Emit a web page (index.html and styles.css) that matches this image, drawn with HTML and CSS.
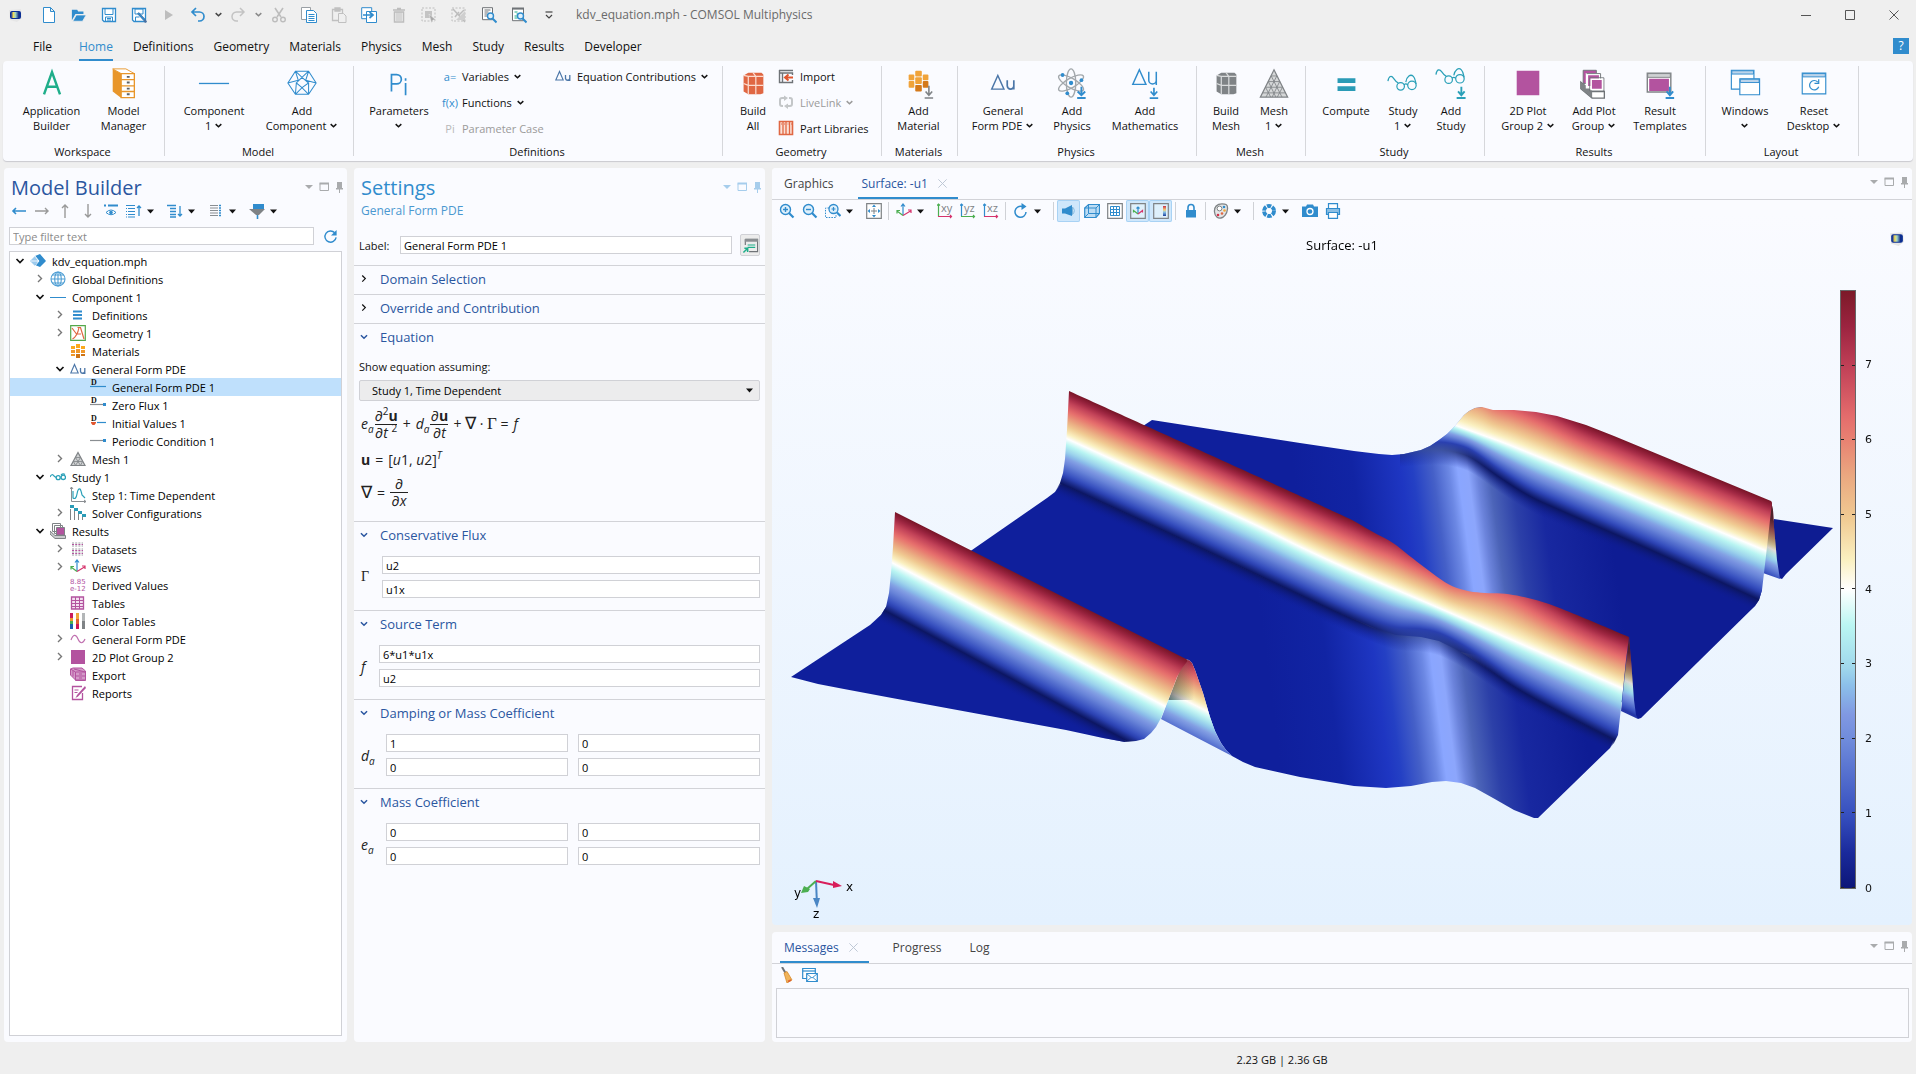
FILE: index.html
```html
<!DOCTYPE html>
<html lang="en">
<head>
<meta charset="utf-8">
<title>kdv_equation.mph - COMSOL Multiphysics</title>
<link rel="stylesheet" href="styles.css">
</head>
<body>
<svg class="sprite" aria-hidden="true">
  <defs>
    <linearGradient id="heat" x1="0" y1="1" x2="0" y2="0"><stop offset="0" stop-color="#1c3fa0"/><stop offset=".4" stop-color="#8cc8ea"/><stop offset=".6" stop-color="#f5d27a"/><stop offset="1" stop-color="#c8324a"/></linearGradient>
    <linearGradient id="chip" x1="0" y1="0" x2="1" y2="0"><stop offset="0" stop-color="#0c2a9c"/><stop offset=".3" stop-color="#f5dd55"/><stop offset=".55" stop-color="#9fd6c8"/><stop offset="1" stop-color="#0a1f80"/></linearGradient>
  </defs>
  <symbol id="logo" viewBox="0 0 16 16"><path d="M2 3l12-1 1 9-5 4-7-2z" fill="#e6e6e6"/><rect x="3" y="4" width="11" height="8" rx="2" fill="#0b2f93"/><rect x="4" y="5" width="8" height="6" rx="1" fill="url(#chip)"/></symbol>
  <symbol id="new" viewBox="0 0 16 18"><path d="M2.500 1.500h7l4 4v11h-11zM9.500 1.500v4h4" fill="#fff" stroke="#308ccd"/></symbol>
  <symbol id="open" viewBox="0 0 18 16"><path d="M1 14V2h6l1 2h6v3H5z" fill="#308ccd"/><path d="M2 15l4-7h11l-4 7z" fill="#308ccd" stroke="#efefef" stroke-width=".8"/></symbol>
  <symbol id="save" viewBox="0 0 16 16"><path d="M1.500 1.500h13v13H3l-1.500-1.500z" fill="#fff" stroke="#308ccd" stroke-width="1.300"/><path d="M4 1.500h8v6H4zM4.500 14v-4h7v4M6 11.500h4M6 13h4" fill="none" stroke="#308ccd"/></symbol>
  <symbol id="saveas" viewBox="0 0 16 16"><path d="M1.500 1.500h13v13H3l-1.500-1.500z" fill="#fff" stroke="#308ccd" stroke-width="1.300"/><path d="M4 2h8v5H4zM4.500 14v-4h4" fill="none" stroke="#308ccd"/><path d="M7 6l6.500 7 1.500 2.500" fill="none" stroke="#4a6fa0" stroke-width="2.400"/><path d="M7 6l6.500 7" fill="none" stroke="#308ccd" stroke-width="1.400"/></symbol>
  <symbol id="play" viewBox="0 0 16 16"><path d="M4 3l8 5-8 5z" fill="#bdbdbd"/></symbol>
  <symbol id="undo" viewBox="0 0 16 16"><path d="M6 1L2 5l4 4M2 5h7.500a4.500 4.500 0 010 9H8" fill="none" stroke="#308ccd" stroke-width="1.700"/></symbol>
  <symbol id="redo" viewBox="0 0 16 16"><path d="M10 1l4 4-4 4M14 5H6.500a4.500 4.500 0 000 9H8" fill="none" stroke="#c3c3c3" stroke-width="1.500"/></symbol>
  <symbol id="chev" viewBox="0 0 8 8"><path d="M1.500 2.800L4 5.200l2.500-2.400" fill="none" stroke="currentColor" stroke-width="1.300"/></symbol>
  <symbol id="cut" viewBox="0 0 16 16"><path d="M4 1l6 9M12 1L6 10" stroke="#bdbdbd" stroke-width="1.600"/><circle cx="4" cy="12.500" r="2.300" fill="none" stroke="#bdbdbd" stroke-width="1.400"/><circle cx="12" cy="12.500" r="2.300" fill="none" stroke="#bdbdbd" stroke-width="1.400"/></symbol>
  <symbol id="copy" viewBox="0 0 16 16"><path d="M.5.500h9v12h-9z" fill="#fff" stroke="#9aa0a5"/><path d="M5.500 3.500h7l3 3v9h-10z" fill="#fff" stroke="#308ccd"/><path d="M7.500 7.500h6M7.500 9.500h6M7.500 11.500h6M7.500 13.500h6" stroke="#308ccd"/></symbol>
  <symbol id="paste" viewBox="0 0 16 16"><path d="M1.500 2.500h10v11h-10zM4 1h5v3H4z" fill="none" stroke="#c0c0c0" stroke-width="1.300"/><path d="M7.500 6.500h5l2.500 2.500v6.500H7.500z" fill="#efefef" stroke="#c0c0c0"/></symbol>
  <symbol id="dup" viewBox="0 0 16 16"><path d="M.7.700h10v11H.7z" fill="#fff" stroke="#308ccd"/><path d="M5.500 4.500h10v11h-10z" fill="#fff" stroke="#308ccd"/><path d="M2 8h9M8.500 5L12 8l-3.500 3" fill="none" stroke="#308ccd" stroke-width="1.700"/></symbol>
  <symbol id="del" viewBox="0 0 16 16"><path d="M2 3h12M6 1.500h4M3.500 5v10h9V5z" fill="none" stroke="#bdbdbd" stroke-width="1.500"/><path d="M6 5v9M8 5v9M10 5v9" stroke="#bdbdbd"/></symbol>
  <symbol id="sel" viewBox="0 0 16 16"><rect x="1" y="1" width="13" height="13" fill="none" stroke="#bdbdbd" stroke-dasharray="2 1.500"/><rect x="4" y="4" width="7" height="7" fill="#c4c4c4"/><path d="M8 7l7 6h-3l-1.500 3z" fill="#a9a9a9" stroke="#efefef" stroke-width=".5"/></symbol>
  <symbol id="desel" viewBox="0 0 16 16"><rect x="1" y="1" width="13" height="13" fill="none" stroke="#bdbdbd" stroke-dasharray="2 1.500"/><path d="M2 2l12 13M13 3L8 8M4 10l4-5" stroke="#bdbdbd" stroke-width="1.500"/><path d="M5 13l9-9v9z" fill="#cfcfcf"/></symbol>
  <symbol id="find" viewBox="0 0 16 16"><path d="M1.500.700h10v12h-10z" fill="#fff" stroke="#6f7377"/><path d="M3.500 3h6M3.500 5h4M3.500 7h3M3.500 9h3" stroke="#6f7377"/><circle cx="9.500" cy="9" r="3" fill="#dff0fb" stroke="#308ccd" stroke-width="1.400"/><path d="M11.500 11.500L15.500 15.500" stroke="#308ccd" stroke-width="2"/></symbol>
  <symbol id="find2" viewBox="0 0 16 16"><path d="M1.500 1.700h11v12h-11z" fill="#fff" stroke="#6f7377"/><path d="M1 1.500h12" stroke="#6f7377" stroke-width="2"/><path d="M3.500 5h3M5.500 7h3M3.500 9h3M3.500 11h3" stroke="#1fae8a"/><circle cx="9.500" cy="9" r="3" fill="#dff0fb" stroke="#308ccd" stroke-width="1.400"/><path d="M11.500 11.500L15.500 15.500" stroke="#308ccd" stroke-width="2"/></symbol>
  <symbol id="more" viewBox="0 0 16 16"><path d="M4.500 5h7" stroke="#444" stroke-width="1.200"/><path d="M5 8l3 3 3-3" fill="none" stroke="#444" stroke-width="1.200"/></symbol>
  <symbol id="min" viewBox="0 0 12 12"><path d="M1 6.500h10" stroke="#555"/></symbol>
  <symbol id="max" viewBox="0 0 12 12"><path d="M1.500 1.500h9v9h-9z" fill="none" stroke="#555"/></symbol>
  <symbol id="x" viewBox="0 0 12 12"><path d="M1.500 1.500l9 9M10.500 1.500l-9 9" stroke="currentColor"/></symbol>

  <symbol id="builder" viewBox="0 0 34 34"><path d="M8.500 29L17 5.500 25.500 29M11.500 21h11" fill="none" stroke="#1fae8a" stroke-width="2.600"/></symbol>
  <symbol id="manager" viewBox="0 0 34 34"><path d="M5 2l9 5v26L5 26z" fill="#e8962b"/><path d="M5 2h14l9 5H14z" fill="#fff" stroke="#e8962b"/><path d="M14 7h14v25.500H14z" fill="#fff" stroke="#e8962b" stroke-width="1.400"/><path d="M14 13.500h14M14 20h14M14 26h14" stroke="#e8962b" stroke-width="1.400"/><path d="M20 10.500h3M20 16.500h3M20 23h3M20 29h3" stroke="#5d6266" stroke-width="2"/></symbol>
  <symbol id="line" viewBox="0 0 34 34"><path d="M1 17.500h32" stroke="#308ccd" stroke-width="1.400"/></symbol>
  <symbol id="addcomp" viewBox="0 0 34 34"><path d="M10 4.500h14L32 17l-8 12H10L2 17zM10 4.500l7 6.500 7-6.500M2 17l11-3M32 17l-11-3M10 29l7-7 7 7M17 11l-6 6 6 5 7-5zM10 4.500L13 14M24 4.500L21 14M11 17l-1 12M24 17v12" fill="none" stroke="#308ccd" stroke-width="1.100"/></symbol>
  <symbol id="params" viewBox="0 0 34 34"><path d="M9 26V8h5.500a5 5 0 010 10H9" fill="none" stroke="#308ccd" stroke-width="1.800"/><path d="M24 17v13M24 12v2.500" stroke="#308ccd" stroke-width="1.800"/></symbol>
  <symbol id="brick" viewBox="0 0 34 34"><path d="M7 9l5-3h14l2 2v20l-3 1-13 0-5-3z" fill="#e06743"/><path d="M12 10h16M12 10v19M12 19.500h16M20 10v19M7 17.500l5 2M12 10L7 9M20 10l-3-4" stroke="#fbdcd0" stroke-width="1.300" fill="none"/></symbol>
  <symbol id="gbrick" viewBox="0 0 34 34"><path d="M7 9l5-3h14l2 2v20l-3 1-13 0-5-3z" fill="#7f8386"/><path d="M12 10h16M12 10v19M12 19.500h16M20 10v19M7 17.500l5 2M12 10L7 9M20 10l-3-4" stroke="#d9dbdc" stroke-width="1.300" fill="none"/></symbol>
  <symbol id="import" viewBox="0 0 16 16"><path d="M1 2.500h14M1.500 2v12.500h3V5M1.500 5h13v2M14.500 12v2.500h-10" fill="none" stroke="#6f7377" stroke-width="1.400"/><path d="M15 9.500H8M10.500 6.500l-3.500 3 3.500 3" fill="none" stroke="#e0562f" stroke-width="2"/></symbol>
  <symbol id="link" viewBox="0 0 16 16"><path d="M7 4H4a2 2 0 00-2 2v4a2 2 0 002 2h1M9 12h3a2 2 0 002-2V6a2 2 0 00-2-2h-1" fill="none" stroke="#c3c6c8" stroke-width="2"/><path d="M6 1.500L10 4 6 7zM10 9.500L6 12l4 3z" fill="#c3c6c8"/></symbol>
  <symbol id="parts" viewBox="0 0 16 16"><path d="M1.500 1.500h13v13h-13z" fill="#fbe1d6" stroke="#e06743" stroke-width="1.600"/><path d="M5 1.500v13M8 1.500v13M11.500 1.500v13" stroke="#e06743" stroke-width="1.300"/><path d="M3 4h1M6 4h1M9.500 4h1M13 4h1" stroke="#e06743"/></symbol>
  <symbol id="mat" viewBox="0 0 34 34"><g fill="#f0a33a"><rect x="6" y="8" width="6" height="6" rx="1"/><rect x="6" y="15" width="6" height="7" rx="1"/><rect x="13" y="4" width="7" height="6" rx="1"/><rect x="13" y="11" width="7" height="7" rx="1"/><rect x="21" y="8" width="6" height="6" rx="1"/></g><rect x="13" y="19" width="7" height="7" rx="1" fill="#d4791a"/><rect x="21" y="15" width="6" height="7" rx="1" fill="#d4791a"/><path d="M27.500 20v10M24 26l3.500 4 3.500-4M23 33h9" fill="none" stroke="#7f8386" stroke-width="1.700"/></symbol>
  <symbol id="du" viewBox="0 0 34 34"><path d="M5 23.500L11.500 9 18 23.500z" fill="none" stroke="#4b76a8" stroke-width="1.500"/><path d="M21.500 14v6a3.500 3.500 0 007 0v-6M28.500 14v10" fill="none" stroke="#4b76a8" stroke-width="1.800"/></symbol>
  <symbol id="addmath" viewBox="0 0 34 34"><path d="M4 18.500L11 3l7 15.500z" fill="none" stroke="#308ccd" stroke-width="1.500"/><path d="M21 5v9a4 4 0 008 0V5M29 5v14" fill="none" stroke="#308ccd" stroke-width="1.600"/><path d="M26.500 22v8M23 26l3.500 4 3.500-4M22 33h9" fill="none" stroke="#308ccd" stroke-width="1.800"/></symbol>
  <symbol id="atom" viewBox="0 0 34 34"><g fill="none" stroke="#a3a8ac" stroke-width="1.500"><ellipse cx="16" cy="17" rx="5" ry="15"/><ellipse cx="16" cy="17" rx="5" ry="15" transform="rotate(60 16 17)"/><ellipse cx="16" cy="17" rx="5" ry="15" transform="rotate(120 16 17)"/></g><g fill="#308ccd"><circle cx="16" cy="17" r="2.300"/><circle cx="7" cy="8.500" r="2"/><circle cx="27" cy="14" r="2"/><circle cx="12" cy="28" r="2"/></g><path d="M27 21v9M23 26l4 4 4-4M22.500 33h9" fill="none" stroke="#308ccd" stroke-width="2"/></symbol>
  <symbol id="tri" viewBox="0 0 34 34"><path d="M17 3L31.500 32h-29z" fill="#d5d7d8" stroke="#7f8386" stroke-width="1.300"/><path d="M14 9.500h6M11 15.500h12M8 21.500h18M5 27.500h24M14 9.500L25.500 32M20 9.500L8.500 32M11 15.500L19 32M23 15.500L15 32M8 21.500L13.500 32M26 21.500L20.500 32" stroke="#7f8386" stroke-width=".9"/></symbol>
  <symbol id="meshnode" viewBox="0 0 16 16"><path d="M8 1.500L15 14.500H1z" fill="#cfd1d2" stroke="#7f8386" stroke-width="1.200"/><path d="M5.500 6.500h5M3.500 10.500h9M5.500 6.500l5 8M10.500 6.500l-5 8M3.500 10.500l2 4M12.500 10.500l-2 4" stroke="#7f8386" stroke-width=".8"/></symbol>
  <symbol id="equal" viewBox="0 0 34 34"><path d="M8 12h19v5H8zM8 20.500h19v5H8z" fill="#2a9bb6"/></symbol>
  <symbol id="glasses" viewBox="0 0 34 34"><g fill="none" stroke="#2aa0b8" stroke-width="1.300"><path d="M1 15c1-6 4-6 6-3 2 3 3 4 5 5M20 16c1-6 5-9 8-6 2 2 2 5 3 8M18 19q2-2 4 0"/><circle cx="14.500" cy="20.500" r="4"/><circle cx="26.500" cy="19.500" r="4.500"/></g></symbol>
  <symbol id="addstudy" viewBox="0 0 34 34"><g fill="none" stroke="#2aa0b8" stroke-width="1.300"><path d="M1 8c1-6 4-6 6-3 2 3 3 4 5 5M20 9c1-6 5-9 8-6 2 2 2 5 3 8M18 12q2-2 4 0"/><circle cx="14.500" cy="13.500" r="4"/><circle cx="26.500" cy="12.500" r="4.500"/></g><path d="M28 21v9M24.500 26l3.500 4 3.500-4M23 33h9.500" fill="none" stroke="#2aa0b8" stroke-width="2"/></symbol>
  <symbol id="square" viewBox="0 0 34 34"><rect x="5" y="4" width="24" height="26" fill="#b3539f"/></symbol>
  <symbol id="plotgrp" viewBox="0 0 34 34"><path d="M3 16v7l12 10h13v-7H15z" fill="#fff" stroke="#6f7377" stroke-width="1.400"/><path d="M3 16l12 10v7L3 23z" fill="#7f8386"/><path d="M5.500 3.500h14v14h-14z" fill="#b3539f" stroke="#6f7377"/><path d="M9.500 7.500h14v14h-14z" fill="#b3539f" stroke="#fff" stroke-width="2.500"/><path d="M9 7h15v14M12.500 11.500h15v14h-15z" fill="none" stroke="#6f7377"/><path d="M14 13h12v11H14z" fill="#b3539f" stroke="#fff" stroke-width="1.600"/></symbol>
  <symbol id="result" viewBox="0 0 34 34"><path d="M3.500 6.500h25v20h-25z" fill="#fff" stroke="#7f8386" stroke-width="1.500"/><path d="M4 7h24v4H4z" fill="#cfd1d3" stroke="#7f8386"/><path d="M5.500 12.500h21v13h-21z" fill="#b3539f"/><path d="M27.500 21v9M24 26l3.500 4 3.500-4M23 33h9" fill="none" stroke="#308ccd" stroke-width="2"/></symbol>
  <symbol id="windows" viewBox="0 0 34 34"><path d="M2.500 3.500h24v20h-24z" fill="#fff" stroke="#308ccd" stroke-width="1.200"/><path d="M3 4h23v3.500H3z" fill="#bcd4ea" stroke="#308ccd"/><path d="M11.500 12.500h21v17h-21z" fill="#fff" stroke="#308ccd" stroke-width="1.200"/><path d="M12 13h20v3.500H12z" fill="#bcd4ea" stroke="#308ccd"/></symbol>
  <symbol id="reset" viewBox="0 0 34 34"><path d="M4.500 6.500h25v22h-25z" fill="#fff" stroke="#308ccd" stroke-width="1.200"/><path d="M5 7h24v3.500H5z" fill="#bcd4ea" stroke="#308ccd"/><path d="M21 16a5 5 0 101 5M22 13v4.500h-4.500" fill="none" stroke="#308ccd" stroke-width="1.300"/></symbol>

  <symbol id="dn" viewBox="0 0 14 14"><path d="M3 5h8L7 9z" fill="currentColor"/></symbol>
  <symbol id="box" viewBox="0 0 14 14"><path d="M3 3.500h8.500v7H3z" fill="none" stroke="currentColor"/><path d="M2.500 3.500h9.500" stroke="currentColor" stroke-width="2"/></symbol>
  <symbol id="pin" viewBox="0 0 14 14"><path d="M5 2h5v6H5zM4 8h7v1.500H4zM7 9h1v4H7z" fill="currentColor"/></symbol>
  <symbol id="caret" viewBox="0 0 9 9"><path d="M1 2.500h7L4.500 6.500z" fill="#111"/></symbol>
  <symbol id="left" viewBox="0 0 16 16"><path d="M1.500 8H15M5 5L2 8l3 3" fill="none" stroke="#308ccd" stroke-width="1.600"/></symbol>
  <symbol id="right" viewBox="0 0 16 16"><path d="M1 8h13.500M11 5l3 3-3 3" fill="none" stroke="#999" stroke-width="1.400"/></symbol>
  <symbol id="up" viewBox="0 0 16 16"><path d="M8 15V2M5 5l3-3 3 3" fill="none" stroke="#999" stroke-width="1.400"/></symbol>
  <symbol id="down" viewBox="0 0 16 16"><path d="M8 1v13M5 11l3 3 3-3" fill="none" stroke="#999" stroke-width="1.400"/></symbol>
  <symbol id="eye" viewBox="0 0 16 16"><path d="M1 2.500h2M5 2.500h10" stroke="#308ccd" stroke-width="2"/><path d="M3 9.500q5-5 10 0q-5 4.500-10 0z" fill="#fff" stroke="#308ccd"/><circle cx="8" cy="9.500" r="1.800" fill="#308ccd"/></symbol>
  <symbol id="collapse" viewBox="0 0 16 16"><path d="M0 2.500h9M0 5.500h1M2 5.500h7M0 8.500h1M2 8.500h7M0 11.500h1M2 11.500h7M0 14h1M2 14h7" stroke="#308ccd" stroke-width="1.200"/><path d="M13 13V3M11 5l2-2 2 2" fill="none" stroke="#308ccd" stroke-width="1.300"/></symbol>
  <symbol id="expand" viewBox="0 0 16 16"><path d="M0 2.500h9M3 5.500h6M3 8.500h6M3 11.500h6M3 14h6" stroke="#308ccd" stroke-width="1.400"/><path d="M13 3v10M11 11l2 2 2-2" fill="none" stroke="#308ccd" stroke-width="1.300"/></symbol>
  <symbol id="cols" viewBox="0 0 16 16"><path d="M2 2.500h8M2 5h8M2 7.500h8M2 10h8M2 12.500h8" stroke="#8a8e92" stroke-width="1.200"/><path d="M11 2.500h2M11 5h2M11 7.500h2M11 10h2M11 12.500h2" stroke="#308ccd" stroke-width="1.400"/></symbol>
  <symbol id="filter" viewBox="0 0 16 16"><path d="M4 1h11v5H4z" fill="#308ccd"/><path d="M0 6h16l-6 6H7z" fill="#7f8386"/><path d="M8.500 12v4" stroke="#308ccd" stroke-width="1.600"/></symbol>
  <symbol id="refresh" viewBox="0 0 16 16"><path d="M12.500 4A6 6 0 1014 9" fill="none" stroke="#308ccd" stroke-width="1.500"/><path d="M14.500 1v6H8.500z" fill="#308ccd"/></symbol>
  <symbol id="open-row" viewBox="0 0 16 16"><path d="M4.500 6L8 9.500 11.500 6" fill="none" stroke="currentColor" stroke-width="1.700"/></symbol>
  <symbol id="shut-row" viewBox="0 0 16 16"><path d="M6 4l3.500 3.500L6 11" fill="none" stroke="currentColor" stroke-width="1.400"/></symbol>
  <symbol id="root" viewBox="0 0 16 16"><path d="M0 8l5-5 3 5-3 5z" fill="#9dcbee"/><path d="M5 3l5-2 6 7-6 6-5-2 4-4z" fill="#308ccd"/><path d="M5 3l4 5-4 5M1 8h8" stroke="#fff" stroke-width=".8" fill="none"/></symbol>
  <symbol id="globe" viewBox="0 0 16 16"><g fill="none" stroke="#4e9ed4" stroke-width="1.100"><circle cx="8" cy="8" r="7"/><ellipse cx="8" cy="8" rx="3.300" ry="7"/><path d="M1 8h14M2.500 4h11M2.500 12h11M8 1v14"/></g></symbol>
  <symbol id="dash" viewBox="0 0 16 16"><path d="M0 8.500h16" stroke="#308ccd"/></symbol>
  <symbol id="defs" viewBox="0 0 16 16"><path d="M3 4.500h9M3 8h9M3 11.500h9" stroke="#308ccd" stroke-width="2"/></symbol>
  <symbol id="geom" viewBox="0 0 16 16"><path d="M.7.700h14.600v14.600H.7z" fill="#fff" stroke="#55a84a" stroke-width="1.200"/><path d="M2.500 14C6 12 8 8 9 2.500M2 3l4.500 6H11M7.500 2.500h3L14 14" fill="none" stroke="#e06743" stroke-width="1.200"/></symbol>
  <symbol id="mats" viewBox="0 0 16 16"><path d="M1 3h4v3H1zM6 1h4v4H6zM11 3h4v3h-4z" fill="#fba91d"/><path d="M1 7h4v3H1zM6 6h4v4H6zM1 11h4v2H1zM11 7h4v3h-4z" fill="#f0982a"/><path d="M6 11h4v4H6zM11 11h4v2h-4z" fill="#cf7414"/></symbol>
  <symbol id="pde" viewBox="0 0 16 16"><path d="M.8 12L4.500 3.500 8.200 12z" fill="none" stroke="#4b76a8" stroke-width="1.100"/><path d="M10.500 7v3.500a2.200 2.200 0 004.300 0V7v6" fill="none" stroke="#4b76a8" stroke-width="1.300"/></symbol>
  <symbol id="dgen" viewBox="0 0 16 16"><path d="M0 7.500h16" stroke="#308ccd" stroke-width="1.200"/><text x="1" y="6" class="dletter">D</text></symbol>
  <symbol id="dzero" viewBox="0 0 16 16"><path d="M0 7.500h13" stroke="#8a8e92" stroke-width="1.200"/><path d="M13 6h3v3h-3z" fill="#308ccd"/><text x="1" y="6" class="dletter">D</text></symbol>
  <symbol id="dinit" viewBox="0 0 16 16"><path d="M7 7.500h9" stroke="#308ccd" stroke-width="1.200"/><path d="M1 7h5v1L4.500 10h-2L1 8z" fill="#e0562f"/><text x="1" y="6" class="dletter">D</text></symbol>
  <symbol id="per" viewBox="0 0 16 16"><path d="M0 7.500h13" stroke="#8a8e92" stroke-width="1.200"/><path d="M13 6h3v3h-3z" fill="#308ccd"/></symbol>
  <symbol id="study" viewBox="0 0 16 16"><path d="M0 8q2-4 4-1l2 1.500M11 6q2-2 4-.5" fill="none" stroke="#2aa0b8" stroke-width="1.200"/><circle cx="8.200" cy="8.700" r="2" fill="none" stroke="#2aa0b8" stroke-width="1.300"/><circle cx="13.300" cy="8.300" r="2.200" fill="none" stroke="#2aa0b8" stroke-width="1.300"/></symbol>
  <symbol id="step" viewBox="0 0 16 16"><path d="M1.500 0v14.500H16M0 2l1.500-2L3 2M14 13l2 1.500-2 1.500" fill="none" stroke="#8a8e92"/><path d="M3 4v7q3 2 4-4 1-6 3-5 1 1 2 6l3 3" fill="none" stroke="#2aa0b8" stroke-width="1.200"/></symbol>
  <symbol id="solver" viewBox="0 0 16 16"><path d="M.5 4v11M4.500 5v10M8.500 7v8M12.500 10v5" stroke="#7f8386"/><path d="M0 0h4v3H0zM4 3h4v3H4zM8 6h4v3H8zM12 9h4v3h-4z" fill="#2a9bb6"/></symbol>
  <symbol id="results" viewBox="0 0 16 16"><path d="M0 8v3l5 4.500h10.500v-3H5z" fill="#c9cbcd" stroke="#7f8386"/><path d="M2.500.500h8v8h-8zM4.500 2.500h8v8h-8z" fill="#fff" stroke="#7f8386"/><path d="M6.500 4.500h8v7.500h-8z" fill="#b3539f" stroke="#7f8386"/></symbol>
  <symbol id="datasets" viewBox="0 0 16 16"><g stroke="#9a9ea2" stroke-dasharray="2 1.200"><path d="M2 2h11M2 5h11M2 8h11M2 11h11M2 14h11"/></g><g stroke="#b3539f" stroke-dasharray="2 1.200"><path d="M2 3.500h11M2 9.500h11M2 12.500h11"/></g></symbol>
  <symbol id="axes" viewBox="0 0 16 16"><path d="M7 12V1M5 3.500L7 1l2 2.500" fill="none" stroke="#308ccd" stroke-width="1.200"/><path d="M7 12.500L1 8M1 10.500V7.500h3" fill="none" stroke="#4caf50" stroke-width="1.200"/><path d="M7 12.500l7.500-4.500M12 7h3v3" fill="none" stroke="#d6336c" stroke-width="1.200"/></symbol>
  <symbol id="derived" viewBox="0 0 16 16"><text x="0" y="7" class="numletter">8.85</text><text x="0" y="14" class="numletter">e-12</text></symbol>
  <symbol id="table" viewBox="0 0 16 16"><path d="M1.500 2h12v12h-12z" fill="#f3dff0" stroke="#b3539f" stroke-width="1.300"/><path d="M1 5.500h13M1 8.500h13M1 11.500h13M5.500 2v12M9.500 2v12" stroke="#b3539f"/></symbol>
  <symbol id="ctables" viewBox="0 0 16 16"><path d="M0 0h3v5H0z" fill="#c91c5c"/><path d="M0 5h3v3H0z" fill="#f0982a"/><path d="M0 8h3v3H0z" fill="#4caf50"/><path d="M0 11h3v5H0z" fill="#1b5fb0"/><path d="M6 0h3v6H6z" fill="#f0a83a"/><path d="M6 6h3v5H6z" fill="#e06030"/><path d="M6 11h3v5H6z" fill="#cf1458"/><path d="M12 0h3v8h-3z" fill="#b3b6b8"/><path d="M12 8h3v8h-3z" fill="#7f8386"/></symbol>
  <symbol id="wave" viewBox="0 0 16 16"><path d="M1 9C3 3 6 3 8 8s5 5 7 0" fill="none" stroke="#c070b0" stroke-width="1.200"/></symbol>
  <symbol id="sq" viewBox="0 0 16 16"><path d="M1 1h14v14H1z" fill="#b3539f"/></symbol>
  <symbol id="export" viewBox="0 0 16 16"><path d="M.5 2L3 1h9l3.500 3v9h-10l-5-5z" fill="#d49ac8" stroke="#b3539f"/><path d="M5.500 5h10v8.500h-10zM.5 2l5 3M5.500 9h10M3 3.500v6M9 7h3M9 11h3M4 2l11 3" fill="none" stroke="#b3539f"/></symbol>
  <symbol id="report" viewBox="0 0 16 16"><path d="M12 1.500H2.500v13h10V8" fill="#fff" stroke="#b3539f" stroke-width="1.300"/><path d="M4.500 5h4M4.500 7.500h3" stroke="#b3539f"/><path d="M15 1L7 10l-1.500 3L8 11.500 16 3z" fill="#b3539f"/></symbol>
  <symbol id="labelbtn" viewBox="0 0 18 18"><path d="M3.500 2.500h13v13h-9M3.500 2.500v6" fill="none" stroke="#6f7377" stroke-width="1.200"/><path d="M3 2h14v3H3z" fill="#8a8e92"/><path d="M6 8.500h8M6 11h8" stroke="#1fae8a" stroke-width="1.200"/><path d="M1.500 16.500l4-4M2.500 12h3.500v4" fill="none" stroke="#1fae8a" stroke-width="1.600"/></symbol>

  <symbol id="zin" viewBox="0 0 16 16"><circle cx="6.500" cy="6.500" r="5" fill="#dff0fb" stroke="#308ccd" stroke-width="1.400"/><path d="M10 10l4.500 4.500" stroke="#308ccd" stroke-width="2.200"/><path d="M6.500 4v5M4 6.500h5" stroke="#308ccd" stroke-width="1.400"/></symbol>
  <symbol id="zout" viewBox="0 0 16 16"><circle cx="6.500" cy="6.500" r="5" fill="#dff0fb" stroke="#308ccd" stroke-width="1.400"/><path d="M10 10l4.500 4.500" stroke="#308ccd" stroke-width="2.200"/><path d="M4 6.500h5" stroke="#308ccd" stroke-width="1.400"/></symbol>
  <symbol id="zbox" viewBox="0 0 16 16"><path d="M4 5H.5v9.500H11V11" fill="none" stroke="#308ccd" stroke-dasharray="1.500 1.200"/><circle cx="8.500" cy="6" r="4.500" fill="#dff0fb" stroke="#308ccd" stroke-width="1.300"/><path d="M12 9.500l3.500 3.500" stroke="#308ccd" stroke-width="2.200"/><path d="M8.500 4v4M6.500 6h4" stroke="#308ccd" stroke-width="1.200"/></symbol>
  <symbol id="extents" viewBox="0 0 16 16"><path d="M.7.700h14.600v14.600H.7z" fill="#fff" stroke="#7f8386" stroke-width="1.200"/><path d="M8 5v6M5 8h6" stroke="#7f8386"/><path d="M8 1.500L10 4H6zM8 14.500L10 12H6zM1.500 8L4 6v4zM14.500 8L12 6v4z" fill="#308ccd"/></symbol>
  <symbol id="xy" viewBox="0 0 16 16"><path d="M1.500 13.500V1M0 2.500L1.500 1 3 2.500" fill="none" stroke="#4caf50" stroke-width="1.200"/><path d="M1 13.500h13.500M13 12l1.500 1.500L13 15" fill="none" stroke="#d6336c" stroke-width="1.200"/><text x="4" y="9" class="viewletter">xy</text></symbol>
  <symbol id="yz" viewBox="0 0 16 16"><path d="M1.500 13.500V1M0 2.500L1.500 1 3 2.500" fill="none" stroke="#308ccd" stroke-width="1.200"/><path d="M1 13.500h13.500M13 12l1.500 1.500L13 15" fill="none" stroke="#4caf50" stroke-width="1.200"/><text x="4" y="9" class="viewletter">yz</text></symbol>
  <symbol id="xz" viewBox="0 0 16 16"><path d="M1.500 13.500V1M0 2.500L1.500 1 3 2.500" fill="none" stroke="#308ccd" stroke-width="1.200"/><path d="M1 13.500h13.500M13 12l1.500 1.500L13 15" fill="none" stroke="#d6336c" stroke-width="1.200"/><text x="4" y="9" class="viewletter">xz</text></symbol>
  <symbol id="rot" viewBox="0 0 16 16"><path d="M9 3.500A5.500 5.500 0 1013 9" fill="none" stroke="#308ccd" stroke-width="1.500"/><path d="M8.500 0l5 3.500-5 3.500z" fill="#308ccd"/></symbol>
  <symbol id="horn" viewBox="0 0 16 16"><path d="M1 5.500h3L11 2v11L4 10.500H1z" fill="#308ccd"/><path d="M11.500 4q3.500 3.500 0 7.500z" fill="#dff0fb" stroke="#7fb6dd"/></symbol>
  <symbol id="cube" viewBox="0 0 16 16"><path d="M4.500 1.500h11v9l-3.500 4H.7V5z" fill="#bcdcf4" stroke="#308ccd" stroke-width="1.200"/><path d="M.7 5H12v9.500M12 5l3.500-3.500M4.500 1.500v9H15M4.500 10.500L1 14" fill="none" stroke="#308ccd"/></symbol>
  <symbol id="grid" viewBox="0 0 16 16"><path d="M.7.700h14.600v14.600H.7z" fill="#fff" stroke="#7f8386" stroke-width="1.200"/><path d="M3.500 3.500h9v9h-9zM3.500 6.500h9M3.500 9.500h9M6.500 3.500v9M9.500 3.500v9" fill="none" stroke="#308ccd"/></symbol>
  <symbol id="axbox" viewBox="0 0 16 16"><path d="M.7.700h14.600v14.600H.7z" fill="#dff0fb" stroke="#7f8386" stroke-width="1.200"/><path d="M8 10.500V4M6.500 5.500L8 4l1.500 1.500" fill="none" stroke="#308ccd" stroke-width="1.200"/><path d="M8 11L3.500 7.500v2" fill="none" stroke="#4caf50" stroke-width="1.200"/><path d="M8 11l4.500-3.500v2" fill="none" stroke="#d6336c" stroke-width="1.200"/></symbol>
  <symbol id="legends" viewBox="0 0 16 16"><path d="M.7.700h14.600v14.600H.7z" fill="#dff0fb" stroke="#7f8386" stroke-width="1.200"/><path d="M10 3h3v10h-3z" fill="url(#heat)"/></symbol>
  <symbol id="lock" viewBox="0 0 16 16"><path d="M3 7h10v7.500H3z" fill="#308ccd"/><path d="M5 7V4.500a3 3 0 016 0V7" fill="none" stroke="#308ccd" stroke-width="1.600"/></symbol>
  <symbol id="palette" viewBox="0 0 16 16"><path d="M9 .8C4 .8 1 4 1.500 9S5 15.500 8 15 14 11 14.500 6 12 .8 9 .8z" fill="#e4e5e6" stroke="#7f8386" stroke-width="1.300"/><circle cx="6.500" cy="5.500" r="2.400" fill="#fff" stroke="#7f8386"/><circle cx="11" cy="4" r="1.300" fill="#308ccd"/><circle cx="11.500" cy="7.500" r="1.300" fill="#f0a83a"/><circle cx="9" cy="10.500" r="1.300" fill="#e06743"/><circle cx="5" cy="12" r="1.300" fill="#d8304a"/></symbol>
  <symbol id="aperture" viewBox="0 0 16 16"><circle cx="8" cy="8" r="5" fill="none" stroke="#308ccd" stroke-width="4" stroke-dasharray="4.200 1.036"/><circle cx="8" cy="8" r="2.600" fill="#fbfcff"/></symbol>
  <symbol id="camera" viewBox="0 0 16 16"><path d="M0 3.500h4l1-2h6l1 2h4V14H0z" fill="#308ccd"/><circle cx="8" cy="8.500" r="3" fill="none" stroke="#fff" stroke-width="1.300"/></symbol>
  <symbol id="printer" viewBox="0 0 16 16"><path d="M3.500.700h9V6h-9z" fill="#fff" stroke="#308ccd" stroke-width="1.200"/><path d="M1.500 5.500h13v6h-13z" fill="#8cbfe4" stroke="#308ccd" stroke-width="1.200"/><path d="M3.500 9.500h9v5.800h-9z" fill="#fff" stroke="#308ccd" stroke-width="1.200"/></symbol>
  <symbol id="broom" viewBox="0 0 16 16"><path d="M3 0l3.500 6" stroke="#6f7377" stroke-width="2"/><path d="M5 6l3-1.500L13 13l-5 3z" fill="#f0b45a" stroke="#d88a2a" stroke-width=".8"/><path d="M12 13l-3 1.500" stroke="#e06030" stroke-width="1.600"/></symbol>
  <symbol id="msgwin" viewBox="0 0 16 16"><path d="M.7 1.500h12.600v10H.7z" fill="#fff" stroke="#308ccd" stroke-width="1.200"/><path d="M.7 4h12.600" stroke="#308ccd" stroke-width="1.200"/><path d="M4.700 6.500h10.600v8H4.700z" fill="#fff" stroke="#308ccd" stroke-width="1.200"/><path d="M5 7l5 4 5-4M5 14l4-3.500M15 14l-4-3.500" fill="none" stroke="#308ccd" stroke-width=".9"/></symbol>
</svg>

<header class="titlebar">
  <svg class="app-logo"><use href="#logo"/></svg>
  <div class="quick">
    <button aria-label="New"><svg><use href="#new"/></svg></button>
    <button aria-label="Open"><svg><use href="#open"/></svg></button>
    <button aria-label="Save"><svg><use href="#save"/></svg></button>
    <button aria-label="Save As"><svg><use href="#saveas"/></svg></button>
    <button aria-label="Run"><svg><use href="#play"/></svg></button>
    <button class="undo" aria-label="Undo"><svg><use href="#undo"/></svg></button>
    <button class="drop" aria-label="Undo list"><svg><use href="#chev"/></svg></button>
    <button class="undo" aria-label="Redo"><svg><use href="#redo"/></svg></button>
    <button class="drop dim" aria-label="Redo list"><svg><use href="#chev"/></svg></button>
    <button aria-label="Cut"><svg><use href="#cut"/></svg></button>
    <button aria-label="Copy"><svg><use href="#copy"/></svg></button>
    <button aria-label="Paste"><svg><use href="#paste"/></svg></button>
    <button aria-label="Duplicate"><svg><use href="#dup"/></svg></button>
    <button aria-label="Delete"><svg><use href="#del"/></svg></button>
    <button aria-label="Select All"><svg><use href="#sel"/></svg></button>
    <button aria-label="Clear Selection"><svg><use href="#desel"/></svg></button>
    <button aria-label="Find"><svg><use href="#find"/></svg></button>
    <button aria-label="Search and Replace"><svg><use href="#find2"/></svg></button>
    <button aria-label="Customize"><svg><use href="#more"/></svg></button>
  </div>
  <h1>kdv_equation.mph - COMSOL Multiphysics</h1>
  <div class="winctl">
    <button aria-label="Minimize"><svg><use href="#min"/></svg></button>
    <button aria-label="Maximize"><svg><use href="#max"/></svg></button>
    <button aria-label="Close"><svg><use href="#x"/></svg></button>
  </div>
</header>

<nav class="menu">
  <a href="#file" class="file">File</a><a href="#home" class="current">Home</a><a href="#definitions">Definitions</a><a href="#geometry">Geometry</a><a href="#materials">Materials</a><a href="#physics">Physics</a><a href="#mesh">Mesh</a><a href="#study">Study</a><a href="#results">Results</a><a href="#developer">Developer</a>
  <button class="help" aria-label="Help">?</button>
</nav>

<section class="ribbon">
  <div class="group g-workspace"><div class="tools">
    <button class="big w72"><svg><use href="#builder"/></svg><span>Application<br>Builder</span></button>
    <button class="big w72"><svg><use href="#manager"/></svg><span>Model<br>Manager</span></button>
  </div><h2>Workspace</h2></div>
  <div class="group g-model"><div class="tools">
    <button class="big w88"><svg><use href="#line"/></svg><span>Component<br>1 <svg class="chev"><use href="#chev"/></svg></span></button>
    <button class="big w88"><svg><use href="#addcomp"/></svg><span>Add<br>Component <svg class="chev"><use href="#chev"/></svg></span></button>
  </div><h2>Model</h2></div>
  <div class="group g-definitions"><div class="tools start">
    <button class="big w80"><svg><use href="#params"/></svg><span>Parameters<br><svg class="chev"><use href="#chev"/></svg></span></button>
    <div class="stack defs">
      <button class="small"><i class="glyph">a=</i>Variables <svg class="chev"><use href="#chev"/></svg></button>
      <button class="small"><i class="glyph">f(x)</i>Functions <svg class="chev"><use href="#chev"/></svg></button>
      <button class="small" disabled><i class="glyph">Pi</i>Parameter Case</button>
    </div>
    <div class="stack">
      <button class="small"><svg><use href="#pde"/></svg>Equation Contributions <svg class="chev"><use href="#chev"/></svg></button>
    </div>
  </div><h2>Definitions</h2></div>
  <div class="group g-geometry"><div class="tools start">
    <button class="big w50"><svg><use href="#brick"/></svg><span>Build<br>All</span></button>
    <div class="stack">
      <button class="small"><svg><use href="#import"/></svg>Import</button>
      <button class="small" disabled><svg><use href="#link"/></svg>LiveLink <svg class="chev"><use href="#chev"/></svg></button>
      <button class="small"><svg><use href="#parts"/></svg>Part Libraries</button>
    </div>
  </div><h2>Geometry</h2></div>
  <div class="group g-materials"><div class="tools">
    <button class="big w72"><svg><use href="#mat"/></svg><span>Add<br>Material</span></button>
  </div><h2>Materials</h2></div>
  <div class="group g-physics"><div class="tools">
    <button class="big w80"><svg><use href="#du"/></svg><span>General<br>Form PDE <svg class="chev"><use href="#chev"/></svg></span></button>
    <button class="big w58"><svg><use href="#atom"/></svg><span>Add<br>Physics</span></button>
    <button class="big w88"><svg><use href="#addmath"/></svg><span>Add<br>Mathematics</span></button>
  </div><h2>Physics</h2></div>
  <div class="group g-mesh"><div class="tools">
    <button class="big w48"><svg><use href="#gbrick"/></svg><span>Build<br>Mesh</span></button>
    <button class="big w48"><svg><use href="#tri"/></svg><span>Mesh<br>1 <svg class="chev"><use href="#chev"/></svg></span></button>
  </div><h2>Mesh</h2></div>
  <div class="group g-study"><div class="tools">
    <button class="big w66"><svg><use href="#equal"/></svg><span>Compute</span></button>
    <button class="big w48"><svg><use href="#glasses"/></svg><span>Study<br>1 <svg class="chev"><use href="#chev"/></svg></span></button>
    <button class="big w48"><svg><use href="#addstudy"/></svg><span>Add<br>Study</span></button>
  </div><h2>Study</h2></div>
  <div class="group g-results"><div class="tools">
    <button class="big w66"><svg><use href="#square"/></svg><span>2D Plot<br>Group 2 <svg class="chev"><use href="#chev"/></svg></span></button>
    <button class="big w66"><svg><use href="#plotgrp"/></svg><span>Add Plot<br>Group <svg class="chev"><use href="#chev"/></svg></span></button>
    <button class="big w66"><svg><use href="#result"/></svg><span>Result<br>Templates</span></button>
  </div><h2>Results</h2></div>
  <div class="group g-layout"><div class="tools">
    <button class="big w66"><svg><use href="#windows"/></svg><span>Windows<br><svg class="chev"><use href="#chev"/></svg></span></button>
    <button class="big w72"><svg><use href="#reset"/></svg><span>Reset<br>Desktop <svg class="chev"><use href="#chev"/></svg></span></button>
  </div><h2>Layout</h2></div>
</section>

<main>
  <section class="panel builder">
    <div class="head">
      <h2 class="ptitle dark">Model Builder</h2>
      <div class="pctl"><svg><use href="#dn"/></svg><svg><use href="#box"/></svg><svg><use href="#pin"/></svg></div>
    </div>
    <div class="bar">
      <button aria-label="Previous"><svg><use href="#left"/></svg></button>
      <button aria-label="Next"><svg><use href="#right"/></svg></button>
      <button aria-label="Move Up"><svg><use href="#up"/></svg></button>
      <button aria-label="Move Down"><svg><use href="#down"/></svg></button>
      <button aria-label="Show"><svg><use href="#eye"/></svg></button>
      <button aria-label="Collapse"><svg><use href="#collapse"/></svg></button><button class="car" aria-label="Collapse options"><svg><use href="#caret"/></svg></button>
      <button aria-label="Expand"><svg><use href="#expand"/></svg></button><button class="car" aria-label="Expand options"><svg><use href="#caret"/></svg></button>
      <button aria-label="Node text"><svg><use href="#cols"/></svg></button><button class="car" aria-label="Node text options"><svg><use href="#caret"/></svg></button>
      <button aria-label="Filter"><svg><use href="#filter"/></svg></button><button class="car" aria-label="Filter options"><svg><use href="#caret"/></svg></button>
    </div>
    <div class="filter">
      <input type="text" placeholder="Type filter text" aria-label="Type filter text">
      <button aria-label="Refresh"><svg><use href="#refresh"/></svg></button>
    </div>
    <ul class="tree">
      <li class="l0 open"><svg><use href="#open-row"/></svg><svg><use href="#root"/></svg>kdv_equation.mph</li>
      <li class="l1"><svg><use href="#shut-row"/></svg><svg><use href="#globe"/></svg>Global Definitions</li>
      <li class="l1 open"><svg><use href="#open-row"/></svg><svg><use href="#dash"/></svg>Component 1</li>
      <li class="l2"><svg><use href="#shut-row"/></svg><svg><use href="#defs"/></svg>Definitions</li>
      <li class="l2"><svg><use href="#shut-row"/></svg><svg><use href="#geom"/></svg>Geometry 1</li>
      <li class="l2"><svg></svg><svg><use href="#mats"/></svg>Materials</li>
      <li class="l2 open"><svg><use href="#open-row"/></svg><svg><use href="#pde"/></svg>General Form PDE</li>
      <li class="l3 selected"><svg></svg><svg><use href="#dgen"/></svg>General Form PDE 1</li>
      <li class="l3"><svg></svg><svg><use href="#dzero"/></svg>Zero Flux 1</li>
      <li class="l3"><svg></svg><svg><use href="#dinit"/></svg>Initial Values 1</li>
      <li class="l3"><svg></svg><svg><use href="#per"/></svg>Periodic Condition 1</li>
      <li class="l2"><svg><use href="#shut-row"/></svg><svg><use href="#meshnode"/></svg>Mesh 1</li>
      <li class="l1 open"><svg><use href="#open-row"/></svg><svg><use href="#study"/></svg>Study 1</li>
      <li class="l2"><svg></svg><svg><use href="#step"/></svg>Step 1: Time Dependent</li>
      <li class="l2"><svg><use href="#shut-row"/></svg><svg><use href="#solver"/></svg>Solver Configurations</li>
      <li class="l1 open"><svg><use href="#open-row"/></svg><svg><use href="#results"/></svg>Results</li>
      <li class="l2"><svg><use href="#shut-row"/></svg><svg><use href="#datasets"/></svg>Datasets</li>
      <li class="l2"><svg><use href="#shut-row"/></svg><svg><use href="#axes"/></svg>Views</li>
      <li class="l2"><svg></svg><svg><use href="#derived"/></svg>Derived Values</li>
      <li class="l2"><svg></svg><svg><use href="#table"/></svg>Tables</li>
      <li class="l2"><svg></svg><svg><use href="#ctables"/></svg>Color Tables</li>
      <li class="l2"><svg><use href="#shut-row"/></svg><svg><use href="#wave"/></svg>General Form PDE</li>
      <li class="l2"><svg><use href="#shut-row"/></svg><svg><use href="#sq"/></svg>2D Plot Group 2</li>
      <li class="l2"><svg></svg><svg><use href="#export"/></svg>Export</li>
      <li class="l2"><svg></svg><svg><use href="#report"/></svg>Reports</li>
    </ul>
  </section>

  <section class="panel settings">
    <div class="head">
      <h2 class="ptitle">Settings</h2>
      <div class="pctl blue"><svg><use href="#dn"/></svg><svg><use href="#box"/></svg><svg><use href="#pin"/></svg></div>
    </div>
    <p class="subtitle">General Form PDE</p>
    <div class="labelrow">
      <label for="node-label">Label:</label>
      <input id="node-label" type="text" value="General Form PDE 1">
      <button aria-label="Go to source"><svg><use href="#labelbtn"/></svg></button>
    </div>
    <section class="sec"><h3><svg class="shut"><use href="#shut-row"/></svg>Domain Selection</h3></section>
    <section class="sec"><h3><svg class="shut"><use href="#shut-row"/></svg>Override and Contribution</h3></section>
    <section class="sec equation"><h3><svg><use href="#open-row"/></svg>Equation</h3>
      <label for="assume">Show equation assuming:</label>
      <div class="combo"><select id="assume"><option>Study 1, Time Dependent</option></select><svg><use href="#caret"/></svg></div>
      <div class="eq e1"><i>e<sub>a</sub></i><span class="frac"><span>∂<sup>2</sup><b>u</b></span><span>∂<i>t</i> <sup>2</sup></span></span><span>+</span><i>d<sub>a</sub></i><span class="frac"><span>∂<b>u</b></span><span>∂<i>t</i></span></span><span>+ <span class="serif">∇</span> · <span class="serif">Γ</span> =</span><i>f</i></div>
      <div class="eq e2"><b>u</b><span>=</span><span>[<i>u</i>1, <i>u</i>2]<sup><i>T</i></sup></span></div>
      <div class="eq e3"><span class="serif">∇</span><span>=</span><span class="frac"><span>∂</span><span>∂<i>x</i></span></span></div>
    </section>
    <section class="sec"><h3><svg><use href="#open-row"/></svg>Conservative Flux</h3>
      <div class="coef c-gamma"><span class="sym serif">Γ</span><div class="fields one"><input type="text" aria-label="Gamma 1" value="u2"><input type="text" aria-label="Gamma 2" value="u1x"></div></div>
    </section>
    <section class="sec"><h3><svg><use href="#open-row"/></svg>Source Term</h3>
      <div class="coef c-f"><span class="sym"><i>f</i></span><div class="fields one"><input type="text" aria-label="f 1" value="6*u1*u1x"><input type="text" aria-label="f 2" value="u2"></div></div>
    </section>
    <section class="sec"><h3><svg><use href="#open-row"/></svg>Damping or Mass Coefficient</h3>
      <div class="coef"><span class="sym"><i>d<sub>a</sub></i></span><div class="fields"><input type="text" aria-label="da 11" value="1"><input type="text" aria-label="da 12" value="0"><input type="text" aria-label="da 21" value="0"><input type="text" aria-label="da 22" value="0"></div></div>
    </section>
    <section class="sec"><h3><svg><use href="#open-row"/></svg>Mass Coefficient</h3>
      <div class="coef"><span class="sym"><i>e<sub>a</sub></i></span><div class="fields"><input type="text" aria-label="ea 11" value="0"><input type="text" aria-label="ea 12" value="0"><input type="text" aria-label="ea 21" value="0"><input type="text" aria-label="ea 22" value="0"></div></div>
    </section>
  </section>

  <div class="right">
    <section class="panel graphics">
      <div class="tabs">
        <a href="#graphics">Graphics</a>
        <a href="#surface" class="on">Surface: -u1<svg><use href="#x"/></svg></a>
        <div class="pctl"><svg><use href="#dn"/></svg><svg><use href="#box"/></svg><svg><use href="#pin"/></svg></div>
      </div>
      <div class="bar">
        <button aria-label="Zoom In"><svg><use href="#zin"/></svg></button>
        <button aria-label="Zoom Out"><svg><use href="#zout"/></svg></button>
        <button aria-label="Zoom Box"><svg><use href="#zbox"/></svg></button><button class="car" aria-label="Zoom options"><svg><use href="#caret"/></svg></button>
        <button aria-label="Zoom Extents"><svg><use href="#extents"/></svg></button>
        <hr>
        <button aria-label="Default View"><svg><use href="#axes"/></svg></button><button class="car" aria-label="View options"><svg><use href="#caret"/></svg></button>
        <button aria-label="XY View"><svg><use href="#xy"/></svg></button>
        <button aria-label="YZ View"><svg><use href="#yz"/></svg></button>
        <button aria-label="XZ View"><svg><use href="#xz"/></svg></button>
        <hr>
        <button aria-label="Rotate"><svg><use href="#rot"/></svg></button><button class="car" aria-label="Rotate options"><svg><use href="#caret"/></svg></button>
        <hr>
        <button class="pressed" aria-label="Scene Light"><svg><use href="#horn"/></svg></button>
        <button aria-label="Transparency"><svg><use href="#cube"/></svg></button>
        <button aria-label="Show Grid"><svg><use href="#grid"/></svg></button>
        <button class="pressed" aria-label="Show Axes"><svg><use href="#axbox"/></svg></button>
        <button class="pressed" aria-label="Show Legends"><svg><use href="#legends"/></svg></button>
        <hr>
        <button aria-label="Lock"><svg><use href="#lock"/></svg></button>
        <hr>
        <button aria-label="Colors"><svg><use href="#palette"/></svg></button><button class="car" aria-label="Color options"><svg><use href="#caret"/></svg></button>
        <hr>
        <button aria-label="Environment"><svg><use href="#aperture"/></svg></button><button class="car" aria-label="Environment options"><svg><use href="#caret"/></svg></button>
        <button aria-label="Snapshot"><svg><use href="#camera"/></svg></button>
        <button aria-label="Print"><svg><use href="#printer"/></svg></button>
      </div>
      <div class="plot">
        <canvas id="surface" width="1140" height="701"></canvas>
        <p class="plot-title">Surface: -u1</p>
        <svg class="plot-logo"><use href="#logo"/></svg>
        <svg class="triad" viewBox="0 0 64 46">
          <path d="M22 8l1 24" stroke="#4a86c4" stroke-width="2"/><path d="M19 25h7l-3 10z" fill="#4a86c4"/>
          <path d="M22 8l-9 8" stroke="#4caf50" stroke-width="2"/><path d="M7 20l3-7 6 3-2 3z" fill="#4caf50"/>
          <path d="M22 8l18 4" stroke="#d81e5b" stroke-width="2"/><path d="M39 8l9 5-9 2z" fill="#d81e5b"/>
          <text x="0" y="24">y</text><text x="52" y="18">x</text><text x="19" y="45">z</text>
        </svg>
        <div class="legend"><div class="scale"></div><ul><li>7</li><li>6</li><li>5</li><li>4</li><li>3</li><li>2</li><li>1</li><li>0</li></ul></div>
      </div>
    </section>
    <section class="panel messages">
      <div class="tabs">
        <a href="#messages" class="on">Messages<svg><use href="#x"/></svg></a>
        <a href="#progress">Progress</a>
        <a href="#log">Log</a>
        <div class="pctl"><svg><use href="#dn"/></svg><svg><use href="#box"/></svg><svg><use href="#pin"/></svg></div>
      </div>
      <div class="bar">
        <button aria-label="Clear"><svg><use href="#broom"/></svg></button>
        <button aria-label="Message window"><svg><use href="#msgwin"/></svg></button>
      </div>
      <div class="log"></div>
    </section>
  </div>
</main>

<footer class="status"><span>2.23 GB | 2.36 GB</span></footer>
<script src="surface.js"></script>
</body>
</html>
```
FILE: surface.js
```js
// Draws the soliton surface: a flat blue sheet with three folded ridges.
const canvas = document.getElementById('surface');
const ctx = canvas.getContext('2d');
ctx.translate(-772, -224);

// Colour table over the data range 0..8.
const table = [
  [0, 12, 22, 120], [0.5, 26, 42, 156], [1, 53, 78, 190], [2, 112, 140, 220], [2.3, 128, 152, 226],
  [2.7, 140, 192, 234], [3, 160, 216, 236], [3.5, 186, 246, 242], [4, 255, 255, 255], [4.4, 250, 240, 192],
  [5, 240, 202, 146], [5.5, 234, 168, 128], [6, 232, 130, 114], [6.3, 230, 108, 108], [7, 194, 66, 88],
  [7.5, 156, 36, 64], [8, 118, 20, 38]
];

function colour(v) {
  const c = Math.max(0, Math.min(8, v));
  let i = 1;
  while (i < table.length - 1 && table[i][0] < c) i++;
  const a = table[i - 1], b = table[i], t = (c - a[0]) / (b[0] - a[0]);
  return 'rgb(' + [1, 2, 3].map(k => Math.round(a[k] + (b[k] - a[k]) * t)).join(',') + ')';
}

// Smooth interpolation through points sorted by x; straight lines beyond the ends.
function along(points, x) {
  const n = points.length;
  const slope = i => {
    const a = points[Math.max(0, i - 1)], b = points[Math.min(n - 1, i + 1)];
    return (b[1] - a[1]) / (b[0] - a[0]);
  };
  if (x <= points[0][0]) return points[0][1] + slope(0) * (x - points[0][0]);
  if (x >= points[n - 1][0]) return points[n - 1][1] + slope(n - 1) * (x - points[n - 1][0]);
  let i = 1;
  while (points[i][0] < x) i++;
  const a = points[i - 1], b = points[i], h = b[0] - a[0], t = (x - a[0]) / h;
  const t2 = t * t, t3 = t2 * t;
  return (2 * t3 - 3 * t2 + 1) * a[1] + (t3 - 2 * t2 + t) * h * slope(i - 1) +
    (3 * t2 - 2 * t3) * b[1] + (t3 - t2) * h * slope(i);
}

function outline(points) {
  ctx.beginPath();
  points.forEach((p, i) => i ? ctx.lineTo(p[0], p[1]) : ctx.moveTo(p[0], p[1]));
  ctx.closePath();
}

// Blue sheet with the bright phase-shift streak through (cx, cy), leaning by lean px per px.
function sheet(points, cx, cy, lean) {
  ctx.save();
  outline(points);
  ctx.clip();
  ctx.transform(1, 0, lean, 1, -lean * cy, 0);
  const g = ctx.createLinearGradient(cx - 170, 0, cx + 140, 0);
  const stops = [[-170, '#0f1f9c'], [-110, '#1124a4'], [-62, '#1e36c2'], [-50, '#2440c4'], [-30, '#4560c8'],
    [-14, '#6c88e4'], [-5, '#8aa6ff'], [5, '#8ca6fc'], [14, '#6c84dc'], [26, '#4c64b8'], [48, '#2c40a8'],
    [75, '#1828a0'], [140, '#0e1c94']];
  stops.forEach(s => g.addColorStop((s[0] + 170) / 310, s[1]));
  ctx.fillStyle = g;
  ctx.fillRect(600, 300, 1500, 600);
  ctx.restore();
}

function ridge(r) {
  ctx.save();
  outline(r.clip);
  ctx.clip();
  for (let x = r.from; x < r.to; x++) {
    const top = along(r.crest, x), mid = along(r.middle, x), low = along(r.valley, x);
    const peak = r.peak ? along(r.peak, x) : 8;
    const soft = r.soft ? Math.exp(-Math.pow((x - r.soft) / 38, 2)) : 0;
    const end = low + 15;
    const g = ctx.createLinearGradient(0, top, 0, end);
    const at = y => Math.max(0, Math.min(1, (y - top) / (end - top)));
    for (let k = 0; k <= 20; k++) {
      const t = k / 20;
      g.addColorStop(at(top + (mid - top) * t), colour(peak + (4 - peak) * t));
    }
    for (let k = 1; k <= 12; k++) {
      const t = k / 12;
      g.addColorStop(at(mid + (low - 8 - mid) * t), colour(4 - 3.2 * t));
    }
    g.addColorStop(at(low), 'rgba(' + Math.round(12 + 36 * soft) + ',' + Math.round(22 + 46 * soft) + ',' +
      Math.round(98 + 40 * soft) + ',' + (1 - 0.4 * soft) + ')');
    g.addColorStop(1, 'rgba(15,30,152,0)');
    ctx.fillStyle = g;
    ctx.fillRect(x, Math.floor(top) - 6, 1, end - top + 8);
  }
  ctx.restore();
}

// Back side of a fold seen through its open end.
function fold(points, from, to, whiteAt, lean, spread, shade) {
  ctx.save();
  outline(points);
  ctx.clip();
  for (let x = from; x < to; x++) {
    const w = whiteAt + lean * (x - from);
    const g = ctx.createLinearGradient(0, w - spread, 0, w + spread);
    for (let k = 0; k <= 16; k++) g.addColorStop(k / 16, colour(7.4 - k * 0.42));
    ctx.fillStyle = g;
    ctx.fillRect(x, w - spread * 2, 1, spread * 4);
  }
  const s = ctx.createLinearGradient(0, whiteAt - spread, 0, whiteAt + spread / 2);
  s.addColorStop(0, 'rgba(40,30,30,' + shade + ')');
  s.addColorStop(1, 'rgba(40,30,30,0)');
  ctx.fillStyle = s;
  ctx.fillRect(from, whiteAt - spread * 3, (to - from) * (spread > 35 ? 0 : 1), spread * 4);
  const e = ctx.createLinearGradient(from + 10, 0, from + 34, 0);
  e.addColorStop(0, 'rgba(30,30,30,' + shade + ')');
  e.addColorStop(1, 'rgba(30,30,30,0)');
  ctx.fillStyle = e;
  if (spread > 35) ctx.fillRect(from, whiteAt - spread * 3, to - from, spread * 3 + 12);
  ctx.restore();
}

const backEdge = [[1152, 420], [1300, 443], [1354, 451], [1379, 454], [1392, 455], [1404, 454], [1421, 450],
  [1430, 446], [1439, 440], [1447, 434], [1454, 427], [1464, 415], [1469, 411], [1475, 408], [1482, 407]];
const crestC = [[1475, 408], [1482, 407], [1493, 410], [1514, 410], [1536, 412], [1557, 416], [1586, 425],
  [1614, 436], [1771, 501]];
const crestB = [[1069, 391], [1350, 519], [1371, 531], [1393, 543], [1411, 557], [1432, 573], [1450, 585],
  [1468, 591], [1486, 593], [1507, 594], [1532, 599], [1557, 607], [1629, 637]];
const valleyB = [[1062, 484], [1177, 537], [1300, 595], [1336, 612], [1371, 627], [1396, 635], [1421, 637],
  [1439, 641], [1461, 652], [1486, 668], [1514, 687], [1550, 707], [1614, 740]];
const frontEdge = [[1538, 818], [1534, 818], [1514, 810], [1493, 798], [1475, 788], [1461, 783], [1446, 781],
  [1432, 782], [1411, 786], [1386, 788], [1354, 786], [1300, 777], [1255, 767], [1243, 762], [1232, 756]];
const foldEdgeA = [[1232, 756], [1226, 750], [1221, 743], [1215, 731], [1210, 717], [1203, 693], [1195, 670],
  [1192, 663], [1189, 660]];
const leftCorner = [[1125, 742], [1103, 738], [1066, 730], [892, 698], [844, 689], [818, 684], [791, 677],
  [870, 625], [881, 615], [886, 607]];

// Far strip of the sheet behind the right-hand ridge.
outline([[1774, 519], [1833, 528], [1786, 574], [1782, 579], [1779, 578], [1765, 540]]);
ctx.fillStyle = '#0e1c92';
ctx.fill();

sheet([...backEdge, [1500, 450], [1700, 520], [1762, 590], [1759, 600], [1755, 606], [1641, 718], [1638, 719],
  [1600, 680], [1400, 640], [1060, 483], [1146, 424]], 1461, 457, 0.135);

sheet([...valleyB, [1610, 748], ...frontEdge, ...foldEdgeA, [1100, 640], ...leftCorner, [972, 550],
  [1047, 498], [1055, 492], [1060, 485]], 1434, 643, 0.13);

fold([[1771, 501], [1773, 510], [1774, 527], [1777, 560], [1779, 573], [1780, 579], [1763, 573]],
  1763, 1781, 545, 0.5, 30, 0.7);
ridge({
  from: 1400, to: 1774, soft: 1425,
  crest: [[1400, 385], [1440, 396], ...crestC.slice(1)],
  middle: [[1421, 412], [1454, 425], [1514, 447], [1766, 551]],
  valley: [[1400, 452], [1436, 450], [1454, 452], [1471, 458], [1500, 478], [1529, 496], [1557, 509], [1657, 553],
    [1759, 600]],
  peak: [[1400, 5.6], [1475, 5.7], [1500, 6.2], [1536, 7], [1580, 7.9], [1620, 8], [1771, 8]],
  clip: [...backEdge.slice(3), ...crestC.slice(2), [1772, 503], [1770, 520], [1767, 547], [1764, 573], [1762, 590],
    [1759, 600], [1755, 606], [1740, 622], [1660, 590], [1540, 530], [1450, 490], [1379, 470]]
});

fold([[1629, 637], [1631, 660], [1634, 700], [1636, 715], [1638, 719], [1621, 711]],
  1620, 1638, 678, 0.5, 30, 0.7);
ridge({
  from: 1050, to: 1632, soft: 1420,
  crest: crestB,
  middle: [[1067, 439], [1251, 523], [1300, 547], [1350, 570], [1443, 610], [1621, 688]],
  valley: valleyB,
  peak: [[1069, 8], [1340, 8], [1390, 7.5], [1432, 6.6], [1475, 6.1], [1510, 6.6], [1550, 7.5], [1590, 8], [1629, 8]],
  clip: [[1069, 391], ...Array.from({length: 140}, (_, i) => [1073 + i * 4, along(crestB, 1073 + i * 4)]),
    [1629, 637], [1626, 660], [1623, 690], [1620, 717], [1618, 735], [1614, 743], [1610, 748], [1596, 762],
    [1480, 700], [1350, 660], [1040, 503], [1055, 492], [1060, 483], [1063, 473], [1065, 459], [1067, 430]]
});

fold([[1183, 662], [1189, 660], ...foldEdgeA.slice().reverse(), [1161, 719]], 1160, 1233, 688, 0.5, 42, 0.55);
ridge({
  from: 868, to: 1190,
  crest: [[895, 512], [1188, 660]],
  middle: [[892, 563], [1164, 706]],
  valley: [[887, 612], [1125, 740]],
  clip: [[895, 512], [1188, 660], [1186, 663], [1182, 668], [1177, 677], [1171, 693], [1161, 718], [1156, 727],
    [1151, 733], [1144, 739], [1136, 741], [1125, 742], [1103, 738], [1066, 730], [860, 640], [870, 624],
    [881, 615], [886, 607], [889, 593], [891, 573], [893, 547]]
});
```
FILE: styles.css
```css
* { box-sizing: border-box; }
body {
  margin: 0;
  min-height: 100vh;
  display: flex;
  flex-direction: column;
  background: #efefef;
  color: #111;
  font: 11px/15px "Open Sans", "Noto Sans", sans-serif;
}
h1, h2, h3, p, ul { margin: 0; padding: 0; font: inherit; list-style: none; }
button { border: 0; margin: 0; padding: 0; background: none; font: inherit; color: inherit; }
a { color: inherit; text-decoration: none; }
svg { display: block; flex: none; overflow: visible; }
sub, sup { line-height: 0; }
.sprite { position: absolute; width: 0; height: 0; }
.dletter { font: bold 8px "Liberation Serif", serif; fill: #111; }
.numletter { font: 7px "DejaVu Sans", sans-serif; fill: #b3539f; }
.viewletter { font: 11px "Open Sans", sans-serif; fill: #7f8386; }

.titlebar { display: flex; align-items: center; height: 29px; padding-left: 7px; }
.app-logo { width: 16px; height: 16px; margin-right: 11px; }
.quick { display: flex; align-items: center; }
.quick button { display: grid; place-items: center; width: 30px; height: 28px; }
.quick svg { width: 16px; height: 18px; }
.quick .undo { width: 28px; }
.quick .drop { width: 12px; color: #444; }
.quick .drop svg { width: 9px; height: 9px; }
.quick .dim { color: #888; }
.titlebar h1 { margin-left: 12px; color: #6a6a6a; font-size: 12px; }
.winctl { display: flex; margin-left: auto; }
.winctl button { display: grid; place-items: center; width: 44px; height: 28px; color: #555; }
.winctl svg { width: 12px; height: 12px; }

.menu { display: flex; gap: 20px; height: 32px; padding: 0 7px 0 33px; font-size: 12px; align-items: stretch; }
.menu a { padding-top: 10px; }
.menu .file { padding-right: 7px; }
.menu .current { color: #308ccd; border-bottom: 2px solid #308ccd; }
.help { margin: 9px 0 0 auto; width: 16px; height: 16px; background: #308ccd; color: #fff; line-height: 16px; }

.ribbon {
  display: flex;
  height: 100px;
  margin: 0 3px;
  background: #fafbff;
  border-radius: 4px;
  box-shadow: 0 1px 1px #c9c9cf;
}
.group { display: flex; flex-direction: column; position: relative; padding: 6px 3px 0 0; }
.group::after { content: ""; position: absolute; right: 0; top: 5px; bottom: 5px; width: 1px; background: #d6d7db; }
.group h2 { margin-top: auto; padding-bottom: 2px; text-align: center; }
.tools { display: flex; justify-content: center; }
.tools.start { justify-content: flex-start; padding-left: 5px; }
.g-workspace { width: 162px; }
.g-workspace .tools { padding-left: 10px; }
.g-model { width: 189px; }
.g-definitions { width: 369px; }
.g-geometry { width: 159px; }
.g-materials { width: 76px; }
.g-physics { width: 239px; }
.g-mesh { width: 109px; }
.g-study { width: 179px; }
.g-results { width: 221px; }
.g-layout { width: 153px; }
.big { display: flex; flex-direction: column; align-items: center; height: 70px; }
.big > svg { width: 32px; height: 32px; margin-bottom: 4px; }
.big .chev { display: inline-block; }
.chev { width: 9px; height: 9px; }
.w48 { width: 48px; }
.w50 { width: 50px; }
.w58 { width: 58px; }
.w66 { width: 66px; }
.w72 { width: 72px; }
.w80 { width: 80px; }
.w88 { width: 88px; }
.stack { display: flex; flex-direction: column; gap: 10px; padding-top: 1px; }
.stack.defs { width: 116px; padding-left: 3px; }
.small { display: flex; align-items: center; gap: 4px; height: 16px; white-space: nowrap; }
.small svg:first-child { width: 16px; height: 16px; margin-right: 2px; }
.small:disabled { color: #9a9a9a; }
.glyph { width: 16px; font-style: normal; color: #308ccd; text-align: center; }
.small:disabled .glyph { color: #b8b8b8; }

main { flex: 1; display: grid; grid-template-columns: 343px 411px 1fr; gap: 7px; padding: 7px 4px 0; }
.panel { background: #fafbff; border-radius: 4px; min-width: 0; }
.head { display: flex; justify-content: space-between; }
.ptitle { font-size: 20px; line-height: 28px; color: #308ccd; }
.ptitle.dark { color: #2a56a0; }
.pctl { display: flex; gap: 1px; color: #a9abad; }
.pctl.blue { color: #a6cdec; }
.pctl svg { width: 14px; height: 14px; }
.bar { display: flex; align-items: center; }
.bar button { display: grid; place-items: center; width: 23px; height: 22px; }
.bar svg { width: 16px; height: 16px; }
.bar .car { width: 18px; padding-right: 7px; }
.bar .car svg { width: 9px; height: 9px; }
.bar hr { width: 1px; height: 18px; margin: 0 3px; border: 0; background: #cfd1d6; }
.bar .pressed { background: #cfe7fb; box-shadow: inset 0 0 0 1px #a8d2f4; border-radius: 2px; }

input, select { font: inherit; color: #000; border: 1px solid #d0d1d6; background: #fff; height: 18px; padding: 0 3px; min-width: 0; border-radius: 0; outline: 0; }
input::placeholder { color: #8a8a8a; opacity: 1; }

.builder { display: flex; flex-direction: column; padding: 6px 5px; }
.builder .head { padding-left: 2px; margin-right: -4px; }
.builder .pctl { padding-top: 6px; }
.builder .bar { margin: -2px 0 5px -2px; }
.filter { display: flex; align-items: center; gap: 9px; margin-bottom: 6px; }
.filter input { width: 305px; }
.filter svg { width: 15px; height: 15px; }
.tree { flex: 1; background: #fff; border: 1px solid #d0d1d6; }
.tree li { display: flex; align-items: center; height: 18px; padding-left: 2px; color: #000; white-space: nowrap; }
.tree svg { width: 16px; height: 16px; color: #777; }
.tree svg + svg { margin: 0 6px 0 2px; }
.tree .open svg:first-child { color: #111; }
.tree .l1 { padding-left: 22px; }
.tree .l2 { padding-left: 42px; }
.tree .l3 { padding-left: 62px; }
.tree .selected { background: #bfe0fc; }

.settings .head { padding: 6px 1px 0 7px; }
.settings .pctl { padding-top: 6px; }
.subtitle { padding-left: 7px; font-size: 12px; line-height: 18px; color: #4a98d0; }
.labelrow { display: grid; grid-template-columns: 33px 1fr 20px; gap: 8px; align-items: center; padding: 0 5px; margin: 14px 0 9px; height: 22px; }
.labelrow button { display: grid; place-items: center; height: 22px; border: 1px solid #d0d1d6; background: #ececec; border-radius: 2px; }
.labelrow button svg { width: 17px; height: 17px; }
.sec { border-top: 1px solid #d2d3d8; padding-bottom: 12px; }
.sec h3 { display: flex; align-items: center; gap: 9px; height: 28px; padding: 0 0 2px 3px; font-size: 13px; color: #2a56a0; }
.sec h3 svg { width: 14px; height: 14px; }
.sec h3 .shut { color: #111; }
.sec:has(.shut) { padding-bottom: 0; }
.equation { padding-bottom: 9px; }
.equation label { display: block; padding: 7px 5px 6px; }
.combo { position: relative; margin: 0 5px; }
.combo select { width: 100%; height: 21px; padding-left: 12px; background: #ececed; appearance: none; border-radius: 2px; display: block; }
.combo svg { position: absolute; right: 6px; top: 6px; width: 9px; height: 9px; }
.eq { display: flex; align-items: center; gap: 5px; padding-left: 7px; font-size: 14px; line-height: 16px; color: #222; }
.eq sub, .eq sup, .sym sub { font-size: 10px; }
.e1 { height: 46px; }
.e2 { height: 26px; }
.e3 { height: 39px; }
.frac { display: inline-flex; flex-direction: column; align-items: center; margin-left: -4px; }
.e3 .frac { margin-left: 0; }
.frac > span + span { border-top: 1px solid #222; min-width: 18px; text-align: center; }
.serif { font-family: "Liberation Serif", serif; font-size: 17px; line-height: 16px; }
.coef { display: grid; grid-template-columns: 25px 1fr; align-items: center; padding: 6px 5px 0 7px; }
.c-gamma { grid-template-columns: 21px 1fr; }
.c-f { grid-template-columns: 18px 1fr; }
.sym { font-size: 14px; color: #222; }
.fields { display: grid; grid-template-columns: 1fr 1fr; gap: 6px 10px; }
.fields.one { grid-template-columns: 1fr; }

.right { display: flex; flex-direction: column; gap: 7px; min-width: 0; }
.tabs { display: flex; height: 32px; padding-left: 8px; border-bottom: 1px solid #d2d3d8; font-size: 12px; }
.tabs a { display: flex; align-items: center; height: 31px; padding: 0 4px; color: #444; }
.tabs a + a { margin-left: 20px; }
.tabs .on { color: #2a56a0; border-bottom: 2px solid #308ccd; padding-top: 2px; }
.tabs a svg { width: 11px; height: 11px; margin: 0 6px 0 9px; color: #b9c4d2; }
.tabs .pctl { margin-left: auto; padding: 7px 1px 0 0; }
.graphics { flex: 1; display: flex; flex-direction: column; background: linear-gradient(#fafbff 6%, #e4f1fe); }
.graphics .tabs { background: #fafbff; border-radius: 4px 4px 0 0; }
.graphics .bar { height: 24px; padding: 0 0 2px 3px; }
.plot { flex: 1; position: relative; }
.plot canvas { display: block; width: 100%; height: 100%; object-fit: contain; }
.plot-title { position: absolute; top: 14px; left: 0; right: 0; text-align: center; font-size: 13px; color: #000; }
.plot-logo { position: absolute; top: 6px; right: 7px; width: 17px; height: 17px; }
.triad { position: absolute; left: 22px; bottom: 6px; width: 64px; height: 46px; }
.triad text { font: 12px "DejaVu Sans", sans-serif; }
.legend { position: absolute; top: 66px; right: 40px; bottom: 36px; display: flex; gap: 9px; }
.scale {
  position: relative;
  width: 16px;
  border: 1px solid #666;
  background: linear-gradient(#7c1a28, #9c2440 6%, #c24258 13%, #e46c6c 21%, #e88272 25%, #eaa880 31%, #f0ca92 38%, #faf0c0 45%, #fff 50%, #baf6f2 56%, #a0d8ec 63%, #8cc0ea 66%, #8098e2 71%, #708cdc 75%, #354ebe 88%, #1a2a9c 94%, #0c1678);
}
.scale::before, .scale::after { content: ""; position: absolute; top: 0; bottom: 0; width: 3px; background: repeating-linear-gradient(transparent 0, transparent calc(12.5% - 1px), #222 calc(12.5% - 1px), #222 12.5%); }
.scale::before { left: 0; }
.scale::after { right: 0; }
.legend ul { display: flex; flex-direction: column; width: 7px; margin: 0 0 -8px; padding-top: 8px; }
.legend li { flex: 1; display: flex; align-items: flex-end; font: 11px/16px "DejaVu Sans", sans-serif; color: #111; }

.messages { height: 110px; display: flex; flex-direction: column; }
.messages .bar { height: 24px; padding: 0 0 2px 3px; }
.log { flex: 1; margin: 0 3px 4px 4px; border: 1px solid #d0d1d6; }
.status { height: 32px; display: flex; align-items: center; justify-content: center; padding: 2px 0 0 648px; }
```
